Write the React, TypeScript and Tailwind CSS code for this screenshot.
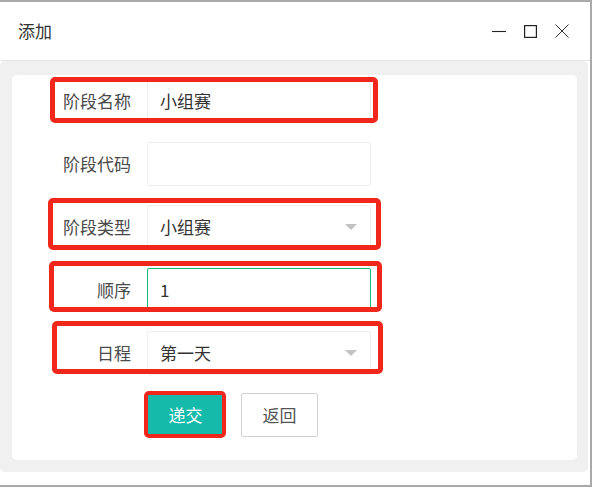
import React from 'react';

const FONT = '"Noto Sans CJK SC", "Noto Sans", sans-serif';

function Caret() {
  return (
    <svg width="12" height="6" viewBox="0 0 12 6" className="absolute right-[13px] top-1/2 -translate-y-1/2">
      <path d="M0 0 L12 0 L6 6 Z" fill="#c2c2c2" />
    </svg>
  );
}

function Row({
  label,
  value,
  select,
  focus,
  box,
  first,
}: {
  label: string;
  value?: string;
  select?: boolean;
  focus?: boolean;
  box?: string;
  first?: boolean;
}) {
  return (
    <div className={`relative flex h-[44px] ${first ? '' : 'mt-[19px]'}`}>
      <div className="w-[135px] pr-[16px] flex items-center justify-end text-[17px] text-[#4a4a4a]">{label}</div>
      <div
        className={`relative w-[224px] h-[44px] flex items-center pl-[12px] text-[17px] text-[#333] bg-white border ${
          focus ? 'border-[#16b777]' : 'border-[#eeeeee]'
        } rounded-[2px]`}
      >
        {value}
        {select && <Caret />}
      </div>
      {box && <div className={`absolute pointer-events-none border-[5px] border-[#f2271c] rounded-[5px] ${box}`} />}
    </div>
  );
}

export default function App() {
  return (
    <div
      className="w-[592px] h-[487px] bg-white border-t-2 border-r-2 border-b-2 border-[#a9a9a9] flex flex-col"
      style={{ fontFamily: FONT }}
    >
      {/* Title bar */}
      <div className="h-[59px] border-b border-[#e6e6e6] flex items-center pl-[18px] pr-[21px]">
        <span className="text-[17px] text-[#333]">添加</span>
        <div className="ml-auto flex items-center">
          <svg width="14" height="14" viewBox="0 0 14 14" className="mr-[18px]">
            <path d="M0 7.5 H14" stroke="#222" strokeWidth="1.1" />
          </svg>
          <svg width="13" height="13" viewBox="0 0 13 13" className="mr-[18px]">
            <rect x="0.6" y="0.6" width="11.8" height="11.8" fill="none" stroke="#222" strokeWidth="1.2" />
          </svg>
          <svg width="14" height="14" viewBox="0 0 14 14">
            <path d="M0.5 0.5 L13.5 13.5 M13.5 0.5 L0.5 13.5" stroke="#333" strokeWidth="1" />
          </svg>
        </div>
      </div>

      {/* Body */}
      <div className="h-[411px] mr-[2px] bg-[#f0f0f0] rounded-[5px] pl-[12px] pt-[14px] pr-[11px] pb-[12px]">
        <div className="h-full bg-white rounded-[5px] pt-[4px]">
          <Row first label="阶段名称" value="小组赛" box="left-[38px] -top-[2px] w-[328px] h-[46px]" />
          <Row label="阶段代码" />
          <Row label="阶段类型" value="小组赛" select box="left-[36px] -top-[7px] w-[333px] h-[52px]" />
          <Row label="顺序" value="1" focus box="left-[37px] -top-[7px] w-[333px] h-[51px]" />
          <Row label="日程" value="第一天" select box="left-[40px] -top-[10px] w-[331px] h-[53px]" />

          {/* Buttons */}
          <div className="relative flex mt-[18px] pl-[135px]">
            <button className="w-[77px] h-[44px] bg-[#16baaa] text-white text-[17px] rounded-[2px]">递交</button>
            <button className="ml-[17px] w-[77px] h-[44px] bg-white border border-[#d2d2d2] text-[#555] text-[17px] rounded-[2px]">
              返回
            </button>
            <div className="absolute pointer-events-none left-[132px] -top-[2px] w-[82px] h-[47px] border-[4px] border-[#f2271c] rounded-[5px]" />
          </div>
        </div>
      </div>
    </div>
  );
}
